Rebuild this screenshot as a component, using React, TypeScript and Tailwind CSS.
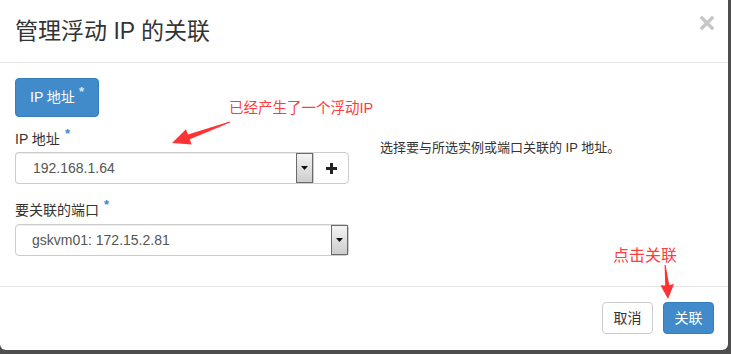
import React from 'react';

const font = { fontFamily: '"Liberation Sans", "Noto Sans CJK SC", sans-serif' };

const ClassicArrow: React.FC = () => (
  <div className="w-[17px] h-full border border-[#6b6b6b] bg-gradient-to-b from-[#f4f4f4] to-[#cdcdcd] flex items-center justify-center shrink-0">
    <svg width="7" height="4" viewBox="0 0 7 4">
      <path d="M0 0h7L3.5 4z" fill="#111" />
    </svg>
  </div>
);

export default function App() {
  return (
    <div className="relative w-[731px] h-[354px] overflow-hidden bg-[#4e4e4e]" style={font}>
      <div className="w-[728px] h-[350px] bg-white rounded-b-[6px] flex flex-col">
        {/* Header */}
        <div className="h-[63px] box-border border-b border-[#e5e5e5] flex justify-between pl-[15px] pr-[14px]">
          <h4 className="self-center text-[23px] leading-none text-[#333] font-normal">管理浮动 IP 的关联</h4>
          <svg className="mt-[16px]" width="14" height="14" viewBox="0 0 14 14">
            <path d="M2 2L12 12M12 2L2 12" stroke="#c6c6c6" strokeWidth="3.4" strokeLinecap="square" />
          </svg>
        </div>

        {/* Body */}
        <div className="h-[224px] box-border border-b border-[#e5e5e5] px-[15px] pt-[15px]">
          <button className="w-[84px] h-[39px] rounded-[4px] bg-[#428bca] border border-[#357ebd] text-white text-[14px] flex items-center pl-[14px]">
            IP 地址
            <span className="block self-start mt-[6px] ml-[4px] text-[13px] leading-[13px] font-bold text-[#d6e8f7]">*</span>
          </button>

          <div className="mt-[12px] flex">
            <div className="w-[334px]">
              <label className="flex items-start h-[20px] leading-[20px] text-[14px] text-[#333]">
                IP 地址
                <span className="block -mt-[2px] ml-[5px] text-[13px] leading-[13px] font-bold text-[#3a87c8]">*</span>
              </label>
              <div className="mt-[3px] flex h-[32px]">
                <div className="flex-1 flex items-center border border-r-0 border-[#ccc] rounded-l-[4px] shadow-[inset_0_1px_1px_rgba(0,0,0,0.075)]">
                  <span className="pl-[17px] text-[14px] text-[#555]">192.168.1.64</span>
                  <div className="ml-auto h-full">
                    <ClassicArrow />
                  </div>
                </div>
                <div className="w-[36px] border border-[#ccc] rounded-r-[4px] flex items-center justify-center">
                  <svg width="11" height="11" viewBox="0 0 11 11">
                    <path d="M4 0h3v4h4v3H7v4H4V7H0V4h4z" fill="#222" />
                  </svg>
                </div>
              </div>

              <label className="mt-[16px] flex items-start h-[20px] leading-[20px] text-[14px] text-[#333]">
                要关联的端口
                <span className="block -mt-[2px] ml-[5px] text-[13px] leading-[13px] font-bold text-[#3a87c8]">*</span>
              </label>
              <div className="mt-[4px] h-[32px] flex items-center border border-[#ccc] rounded-[4px] shadow-[inset_0_1px_1px_rgba(0,0,0,0.075)]">
                <span className="pl-[16px] text-[14px] text-[#555]">gskvm01: 172.15.2.81</span>
                <div className="ml-auto h-full">
                  <ClassicArrow />
                </div>
              </div>
            </div>
            <p className="ml-[31px] mt-[10px] text-[13px] leading-[18px] text-[#333]">选择要与所选实例或端口关联的 IP 地址。</p>
          </div>
        </div>

        {/* Footer */}
        <div className="flex justify-end gap-[10px] pr-[14px] pt-[15px]">
          <button className="w-[51px] h-[32px] rounded-[4px] border border-[#ccc] bg-white text-[14px] text-[#333]">取消</button>
          <button className="w-[51px] h-[32px] rounded-[4px] border border-[#357ebd] bg-[#428bca] text-[14px] text-white">关联</button>
        </div>
      </div>

      {/* Annotations */}
      <span className="absolute left-[229px] top-[98px] text-[14.5px] leading-[20px] text-[#ff3b3b]">已经产生了一个浮动IP</span>
      <span className="absolute left-[613px] top-[246px] text-[16px] leading-[20px] text-[#ff3b3b]">点击关联</span>
      <svg className="absolute inset-0 pointer-events-none" width="731" height="354" viewBox="0 0 731 354">
        <polygon
          points="230.2,122.5 189.8,139.3 191.6,144.6 172,143 186,129.3 188,134.5 229.8,121.5"
          fill="#ff3333"
        />
        <polygon
          points="664.6,265 665.6,265 669.3,285 674,284 668,299 660.5,285.2 665.2,285.6"
          fill="#ff3333"
        />
      </svg>
    </div>
  );
}
